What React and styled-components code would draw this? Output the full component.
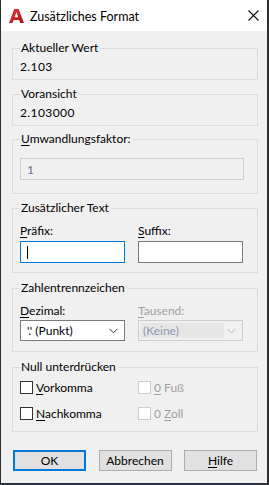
import React from 'react';
import styled, { createGlobalStyle } from 'styled-components';

const GlobalStyle = createGlobalStyle`
  html, body {
    margin: 0;
    padding: 0;
    background: #f0f0f0;
  }
  body {
    font-family: Lato, "Liberation Sans", sans-serif;
    font-size: 12px;
    color: #000;
  }
`;

const AppIcon = () => (
  <svg width="15" height="14" viewBox="0 0 15 14">
    <defs>
      <linearGradient id="acad" x1="0" y1="0" x2="1" y2="1">
        <stop offset="0" stopColor="#e8333a" />
        <stop offset="1" stopColor="#a8141b" />
      </linearGradient>
    </defs>
    <path
      fillRule="evenodd"
      fill="url(#acad)"
      d="M0 14 L5.2 0 L9.6 0 L15 14 L11.2 14 L10.2 11 L4.6 11 L3.6 14 Z M5.6 8.2 L9.2 8.2 L7.4 3 Z"
    />
  </svg>
);

const CloseIcon = () => (
  <svg width="11" height="11" viewBox="0 0 11 11">
    <path d="M0.5 0.5 L10.5 10.5 M10.5 0.5 L0.5 10.5" stroke="#111" strokeWidth="1.1" />
  </svg>
);

const ChevronIcon = ({ color }) => (
  <svg width="9" height="6" viewBox="0 0 9 6">
    <path d="M0.5 0.8 L4.5 4.8 L8.5 0.8" fill="none" stroke={color} strokeWidth="1" />
  </svg>
);

const Dialog = () => (
  <Window>
    <TitleBar>
      <AppIcon />
      <Title>Zusätzliches Format</Title>
      <CloseButton>
        <CloseIcon />
      </CloseButton>
    </TitleBar>

    <Body>
      <Group $pt={4} $pb={5}>
        <Legend>Aktueller Wert</Legend>
        <ValueText>2.103</ValueText>
      </Group>

      <Group $mt={7} $pt={4} $pb={5}>
        <Legend>Voransicht</Legend>
        <ValueText>2.103000</ValueText>
      </Group>

      <Group $mt={6} $pt={12} $pb={13}>
        <Legend><Mn>U</Mn>mwandlungsfaktor:</Legend>
        <TextBox $disabled $width={224}>1</TextBox>
      </Group>

      <Group $mt={7} $pt={8} $pb={9}>
        <Legend>Zusätzlicher Text</Legend>
        <Columns>
          <Field>
            <FieldLabel><Mn>P</Mn>räfix:</FieldLabel>
            <TextBox $focused><Caret /></TextBox>
          </Field>
          <Field>
            <FieldLabel><Mn>S</Mn>uffix:</FieldLabel>
            <TextBox />
          </Field>
        </Columns>
      </Group>

      <Group $mt={8} $pt={8} $pb={10}>
        <Legend>Zahlentrennzeichen</Legend>
        <Columns>
          <Field $gap={2}>
            <FieldLabel><Mn>D</Mn>ezimal:</FieldLabel>
            <Combo>
              <ComboValue>'.' (Punkt)</ComboValue>
              <ChevronIcon color="#333" />
            </Combo>
          </Field>
          <Field $gap={2}>
            <FieldLabel $disabled><Mn>T</Mn>ausend:</FieldLabel>
            <Combo $disabled>
              <ComboValue $disabled>(Keine)</ComboValue>
              <ChevronIcon color="#b4b4b4" />
            </Combo>
          </Field>
        </Columns>
      </Group>

      <Group $mt={8} $pt={7} $pb={11}>
        <Legend>Null unterdrücken</Legend>
        <CheckGrid>
          <CheckRow>
            <CheckBox />
            <CheckLabel><Mn>V</Mn>orkomma</CheckLabel>
          </CheckRow>
          <CheckRow>
            <CheckBox $disabled />
            <CheckLabel $disabled><Mn>0</Mn> Fuß</CheckLabel>
          </CheckRow>
          <CheckRow>
            <CheckBox />
            <CheckLabel><Mn>N</Mn>achkomma</CheckLabel>
          </CheckRow>
          <CheckRow>
            <CheckBox $disabled />
            <CheckLabel $disabled>0 <Mn>Z</Mn>oll</CheckLabel>
          </CheckRow>
        </CheckGrid>
      </Group>

      <ButtonRow>
        <Button $default>OK</Button>
        <Button>Abbrechen</Button>
        <Button><Mn>H</Mn>ilfe</Button>
      </ButtonRow>
    </Body>
  </Window>
);

export default function App() {
  return (
    <>
      <GlobalStyle />
      <Dialog />
    </>
  );
}

const Window = styled.div`
  width: 269px;
  height: 485px;
  box-sizing: border-box;
  display: flex;
  flex-direction: column;
  background: #f0f0f0;
  border-left: 1px solid #2e2e2e;
  border-right: 2px solid #2e2e2e;
  border-bottom: 2px solid #2b3240;
`;

const TitleBar = styled.div`
  height: 31px;
  flex: none;
  display: flex;
  align-items: center;
  padding: 0 0 0 8px;
  background: #fff;
`;

const Title = styled.span`
  margin-left: 6px;
  font-size: 12.5px;
  color: #000;
  padding-top: 1px;
`;

const CloseButton = styled.div`
  margin-left: auto;
  width: 11px;
  height: 11px;
  margin-right: 8px;
  display: flex;
`;

const Body = styled.div`
  flex: 1;
  display: flex;
  flex-direction: column;
  padding: 10px 9px 0 11px;
`;

const Group = styled.fieldset`
  margin: ${(p) => p.$mt || 0}px 0 0 0;
  padding: ${(p) => p.$pt}px 12px ${(p) => p.$pb}px 7px;
  border: 1px solid #dcdcdc;
  min-inline-size: 0;
`;

const Legend = styled.legend`
  padding: 0 2px 0 1px;
  line-height: 14px;
  font-size: 12px;
  color: #000;
`;

const Mn = styled.span`
  text-decoration: underline;
  text-underline-offset: 2px;
`;

const ValueText = styled.div`
  line-height: 15px;
  color: #000;
  letter-spacing: 0.4px;
`;

const Columns = styled.div`
  display: grid;
  grid-template-columns: 105px 105px;
  column-gap: 13px;
`;

const Field = styled.div`
  display: flex;
  flex-direction: column;
  gap: ${(p) => (p.$gap !== undefined ? p.$gap : 3)}px;
`;

const FieldLabel = styled.div`
  line-height: 15px;
  color: ${(p) => (p.$disabled ? '#a0a0a0' : '#000')};
`;

const TextBox = styled.div`
  box-sizing: border-box;
  width: ${(p) => (p.$width ? `${p.$width}px` : '100%')};
  height: 22px;
  display: flex;
  align-items: center;
  padding-left: 6px;
  background: ${(p) => (p.$disabled ? '#f0f0f0' : '#fff')};
  border: 1px solid
    ${(p) => (p.$focused ? '#0078d7' : p.$disabled ? '#cccccc' : '#7a7a7a')};
  color: #6d6d8d;
`;

const Caret = styled.span`
  width: 1px;
  height: 13px;
  background: #000;
`;

const Combo = styled.div`
  box-sizing: border-box;
  height: 21px;
  display: flex;
  align-items: center;
  justify-content: space-between;
  padding: 2px 6px 2px 2px;
  background: ${(p) => (p.$disabled ? '#f0f0f0' : '#fff')};
  border: 1px solid ${(p) => (p.$disabled ? '#cccccc' : '#7a7a7a')};
`;

const ComboValue = styled.div`
  align-self: stretch;
  display: flex;
  align-items: center;
  width: 81px;
  padding-left: ${(p) => (p.$disabled ? 2 : 4)}px;
  background: ${(p) => (p.$disabled ? '#e6e6e6' : 'transparent')};
  color: ${(p) => (p.$disabled ? '#8e98b0' : '#000')};
`;

const CheckGrid = styled.div`
  display: grid;
  grid-template-columns: 105px 105px;
  column-gap: 13px;
  row-gap: 13px;
`;

const CheckRow = styled.div`
  display: flex;
  align-items: center;
  height: 13px;
  gap: 3px;
`;

const CheckBox = styled.span`
  box-sizing: border-box;
  width: 13px;
  height: 13px;
  flex: none;
  background: #fff;
  border: 1px solid ${(p) => (p.$disabled ? '#cccccc' : '#333')};
`;

const CheckLabel = styled.span`
  line-height: 13px;
  color: ${(p) => (p.$disabled ? '#a0a0a0' : '#000')};
`;

const ButtonRow = styled.div`
  display: flex;
  justify-content: space-between;
  margin: 18px 1px 0 1px;
`;

const Button = styled.button`
  box-sizing: border-box;
  width: 73px;
  height: 21px;
  padding: 0;
  font-family: inherit;
  font-size: 12px;
  color: #000;
  background: #e1e1e1;
  border: ${(p) => (p.$default ? '2px solid #0078d7' : '1px solid #adadad')};
  border-radius: 0;
`;
